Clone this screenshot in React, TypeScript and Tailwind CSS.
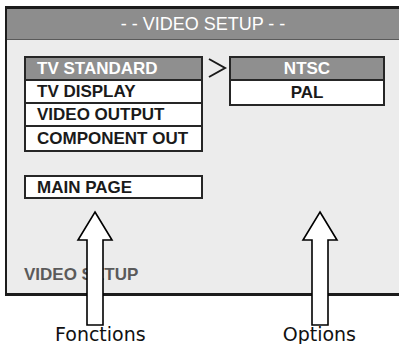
import React from "react";

const functions = ["TV STANDARD", "TV DISPLAY", "VIDEO OUTPUT", "COMPONENT OUT"];
const options = ["NTSC", "PAL"];

function MenuBox({
  items,
  selected,
  centered,
}: {
  items: string[];
  selected: number;
  centered?: boolean;
}) {
  return (
    <div className="flex flex-col border-2 border-[#262626] divide-y-2 divide-[#262626]">
      {items.map((item, i) => (
        <div
          key={item}
          className={`flex h-[23px] items-center text-[17px] font-bold leading-none ${
            centered ? "justify-center" : "pl-[11px]"
          } ${i === selected ? "bg-[#8f8f8f] text-white" : "bg-white text-[#1a1a1a]"}`}
        >
          {item}
        </div>
      ))}
    </div>
  );
}

function Arrow({ x }: { x: number }) {
  // hollow up arrow, drawn relative to its tip
  return (
    <svg
      className="absolute top-[210px]"
      style={{ left: x - 19 }}
      width="38"
      height="118"
      viewBox="0 0 38 118"
    >
      <polygon
        points="19,2 36,30 27,30 27,115 11,115 11,30 2,30"
        fill="white"
        stroke="black"
        strokeWidth="1.6"
        strokeLinejoin="miter"
      />
    </svg>
  );
}

export default function App() {
  return (
    <div className="relative h-[344px] w-[399px] overflow-hidden bg-white font-['Liberation_Sans',Arial,sans-serif]">
      <div className="ml-[5px] mt-[6px] flex h-[290px] w-[394px] flex-col border-b-[3px] border-l-[2px] border-t-[3px] border-[#1c1c1c]">
        <div className="flex h-[31px] items-center justify-center border-b border-[#5a5a5a] bg-[#8d8d8d] text-[18px] text-white">
          - - VIDEO SETUP - -
        </div>
        <div className="flex flex-1 flex-col bg-[#ececec] pl-[17px] pt-[16px]">
          <div className="flex items-start">
            <div className="flex w-[179px] flex-col">
              <MenuBox items={functions} selected={0} />
              <div className="mt-[23px] flex h-[24px] items-center border-2 border-[#262626] bg-white pl-[11px] text-[17px] font-bold leading-none text-[#1a1a1a]">
                MAIN PAGE
              </div>
            </div>
            <svg className="ml-[5px] mt-[2px]" width="20" height="20" viewBox="0 0 20 20">
              <polyline points="1,1 17,10 1,19" fill="none" stroke="#1a1a1a" strokeWidth="2" />
            </svg>
            <div className="ml-[1px] w-[156px]">
              <MenuBox items={options} selected={0} centered />
            </div>
          </div>
          <div className="mt-auto pb-[8px] text-[17px] font-bold leading-[20px] text-[#5a5a5a]">
            VIDEO SETUP
          </div>
        </div>
      </div>
      <div className="flex pt-[28px] font-['DejaVu_Sans',Verdana,sans-serif] text-[19px] leading-[21px] text-[#111]">
        <span className="ml-[55px]">Fonctions</span>
        <span className="ml-[137px]">Options</span>
      </div>
      <Arrow x={95} />
      <Arrow x={320} />
    </div>
  );
}
